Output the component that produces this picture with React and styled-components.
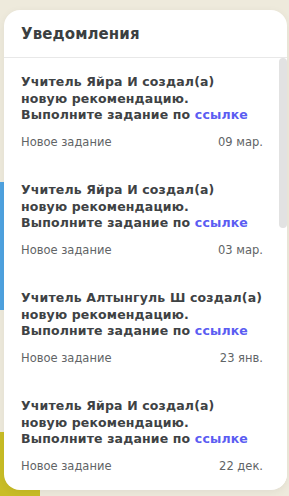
import styled, { createGlobalStyle } from "styled-components";

const GlobalStyle = createGlobalStyle`
  html, body {
    margin: 0;
    padding: 0;
    height: 100%;
  }
  body {
    font-family: "DejaVu Sans", "Liberation Sans", sans-serif;
    background:
      linear-gradient(to bottom,
        transparent 0, transparent 182px,
        #4fa3e1 182px, #4fa3e1 310px,
        transparent 310px, transparent 432px,
        #c9bd25 432px, #c9bd25 100%) left top / 40px 100% no-repeat,
      #eeeadc;
    overflow: hidden;
  }
`;

const Page = styled.div`
  width: 289px;
  height: 496px;
  box-sizing: border-box;
  padding: 10px 2px 6px 4px;
  display: flex;
`;

const Card = styled.div`
  flex: 1;
  display: flex;
  flex-direction: column;
  background: #fff;
  border-radius: 16px;
  overflow: hidden;
  box-shadow: 0 2px 8px rgba(0, 0, 0, 0.06);
`;

const Header = styled.div`
  height: 47px;
  display: flex;
  align-items: center;
  padding: 0 17px;
  border-bottom: 1px solid #e8e8e8;
  flex-shrink: 0;
`;

const Title = styled.h2`
  margin: 0;
  font-size: 15px;
  font-weight: 700;
  color: #3b3f41;
  letter-spacing: 0.1px;
`;

const Body = styled.div`
  flex: 1;
  min-height: 0;
  display: flex;
`;

const List = styled.div`
  flex: 1;
  overflow: hidden;
`;

const Track = styled.div`
  width: 8px;
  flex-shrink: 0;
  background: #fff;
`;

const Thumb = styled.div`
  height: 170px;
  border-radius: 4px;
  background: #e2e2e2;
`;

const Item = styled.div`
  padding: 16px 16px 16.5px 17px;
`;

const Message = styled.p`
  margin: 0;
  font-size: 12.5px;
  line-height: 16.5px;
  font-weight: 700;
  letter-spacing: 0.15px;
  color: #3e4244;
  white-space: nowrap;
`;

const Link = styled.a`
  color: #5b5cf2;
  text-decoration: none;
`;

const Meta = styled.div`
  display: flex;
  justify-content: space-between;
  margin-top: 10px;
  font-size: 11.5px;
  line-height: 16px;
  color: #616466;
`;

const items = [
  { teacher: "Яйра И", date: "09 мар." },
  { teacher: "Яйра И", date: "03 мар." },
  { teacher: "Алтынгуль Ш", date: "23 янв." },
  { teacher: "Яйра И", date: "22 дек." },
  { teacher: "Яйра И", date: "15 дек." },
];

export default function App() {
  return (
    <>
      <GlobalStyle />
      <Page>
        <Card>
          <Header>
            <Title>Уведомления</Title>
          </Header>
          <Body>
            <List>
              {items.map((it, i) => (
                <Item key={i}>
                  <Message>
                    Учитель {it.teacher} создал(а)
                    <br />
                    новую рекомендацию.
                    <br />
                    Выполните задание по <Link href="#">ссылке</Link>
                  </Message>
                  <Meta>
                    <span>Новое задание</span>
                    <span>{it.date}</span>
                  </Meta>
                </Item>
              ))}
            </List>
            <Track>
              <Thumb />
            </Track>
          </Body>
        </Card>
      </Page>
    </>
  );
}
